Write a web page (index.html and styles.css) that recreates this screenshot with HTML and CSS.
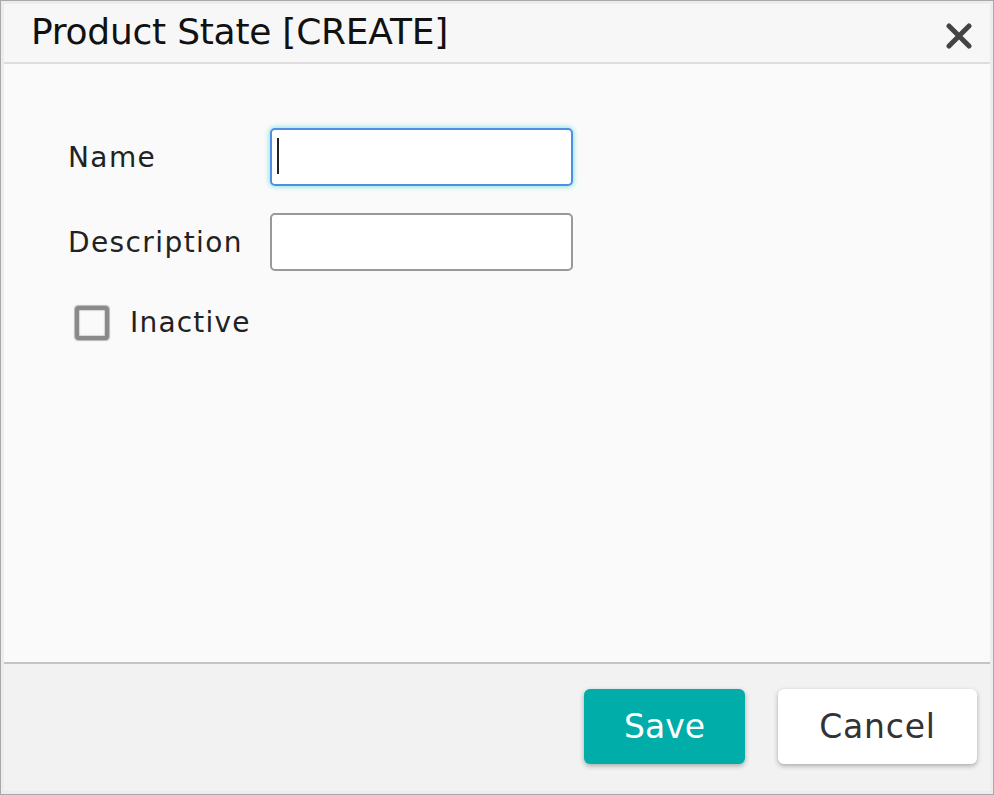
FILE: index.html
```html
<!DOCTYPE html>
<html lang="en">
<head>
<meta charset="utf-8">
<title>Product State [CREATE]</title>
<link rel="stylesheet" href="styles.css">
</head>
<body>
<div class="frame">
  <div class="dialog">
    <header class="dialog-header">
      <h1 class="dialog-title">Product State [CREATE]</h1>
      <button class="close-btn" type="button" aria-label="Close">
        <svg width="26" height="26" viewBox="0 0 26 26" aria-hidden="true">
          <path d="M3 3 L23 23 M23 3 L3 23" stroke="#444" stroke-width="5" stroke-linecap="round" fill="none"/>
        </svg>
      </button>
    </header>
    <main class="dialog-body">
      <div class="form-grid">
        <label class="field-label" for="name">Name</label>
        <div class="field field-focused">
          <input id="name" class="text-input" type="text">
          <span class="caret"></span>
        </div>
        <label class="field-label" for="desc">Description</label>
        <div class="field">
          <input id="desc" class="text-input" type="text">
        </div>
      </div>
      <label class="check-row">
        <span class="checkbox"></span>
        <span class="check-label">Inactive</span>
      </label>
    </main>
    <footer class="dialog-footer">
      <button class="btn btn-primary" type="button">Save</button>
      <button class="btn btn-secondary" type="button">Cancel</button>
    </footer>
  </div>
</div>
</body>
</html>
```
FILE: styles.css
```css
html, body {
  margin: 0;
  padding: 0;
}
body {
  width: 994px;
  height: 795px;
  font-family: "DejaVu Sans", "Noto Sans", sans-serif;
  color: #222;
  background: #eeeeee;
}
.frame {
  box-sizing: border-box;
  width: 994px;
  height: 795px;
  border: 1px solid #a9a9a9;
  padding: 3px;
  background: #ececec;
}
.dialog {
  display: flex;
  flex-direction: column;
  height: 100%;
  background: #fafafa;
}
.dialog-header {
  box-sizing: border-box;
  height: 60px;
  display: flex;
  align-items: center;
  justify-content: space-between;
  padding: 0 18px 3px 27px;
  background: #f7f7f7;
  border-bottom: 2px solid #dddddd;
}
.dialog-title {
  margin: 0;
  font-size: 36px;
  font-weight: normal;
  color: #111;
  letter-spacing: -0.25px;
}
.close-btn {
  border: 0;
  background: transparent;
  padding: 0;
  margin-top: 9px;
  width: 26px;
  height: 26px;
  display: flex;
}
.dialog-body {
  flex: 1;
  padding: 64px 0 0 64px;
}
.form-grid {
  display: grid;
  grid-template-columns: 202px 303px;
  row-gap: 27px;
  align-items: center;
}
.field-label {
  font-size: 28px;
  letter-spacing: 1.4px;
  color: #222;
}
.field {
  position: relative;
  height: 58px;
}
.text-input {
  box-sizing: border-box;
  width: 303px;
  height: 58px;
  margin: 0;
  border: 2px solid #999;
  border-radius: 5px;
  background: #fff;
  outline: none;
  font: inherit;
}
.field-focused .text-input {
  border-color: #4f8fe3;
  box-shadow: 0 0 5px 1px #8fe3e3;
}
.caret {
  position: absolute;
  left: 7px;
  top: 10px;
  width: 2px;
  height: 36px;
  background: #222;
}
.check-row {
  display: flex;
  align-items: center;
  margin-top: 35px;
  padding-left: 7px;
  height: 33px;
}
.checkbox {
  box-sizing: border-box;
  width: 34px;
  height: 34px;
  border: 4px solid #8a8a8a;
  border-radius: 4px;
  background: #fafafa;
  box-shadow: 0 0 1px 0.5px rgba(120,120,120,0.5), inset 0 0 1px 0.5px rgba(120,120,120,0.5);
}
.check-label {
  margin-left: 21px;
  font-size: 28px;
  letter-spacing: 1.2px;
  color: #222;
}
.dialog-footer {
  box-sizing: border-box;
  height: 129px;
  display: flex;
  justify-content: flex-end;
  align-items: flex-start;
  gap: 33px;
  padding: 25px 13px 0 0;
  background: #f2f2f2;
  border-top: 2px solid #c4c4c4;
}
.btn {
  height: 75px;
  border: 0;
  border-radius: 6px;
  font-family: inherit;
  font-size: 33px;
  box-shadow: 0 2px 5px rgba(0,0,0,0.3);
}
.btn-primary {
  width: 161px;
  background: #00ada8;
  color: #fff;
}
.btn-secondary {
  width: 199px;
  background: #fff;
  color: #333;
  letter-spacing: 0.8px;
}
```
